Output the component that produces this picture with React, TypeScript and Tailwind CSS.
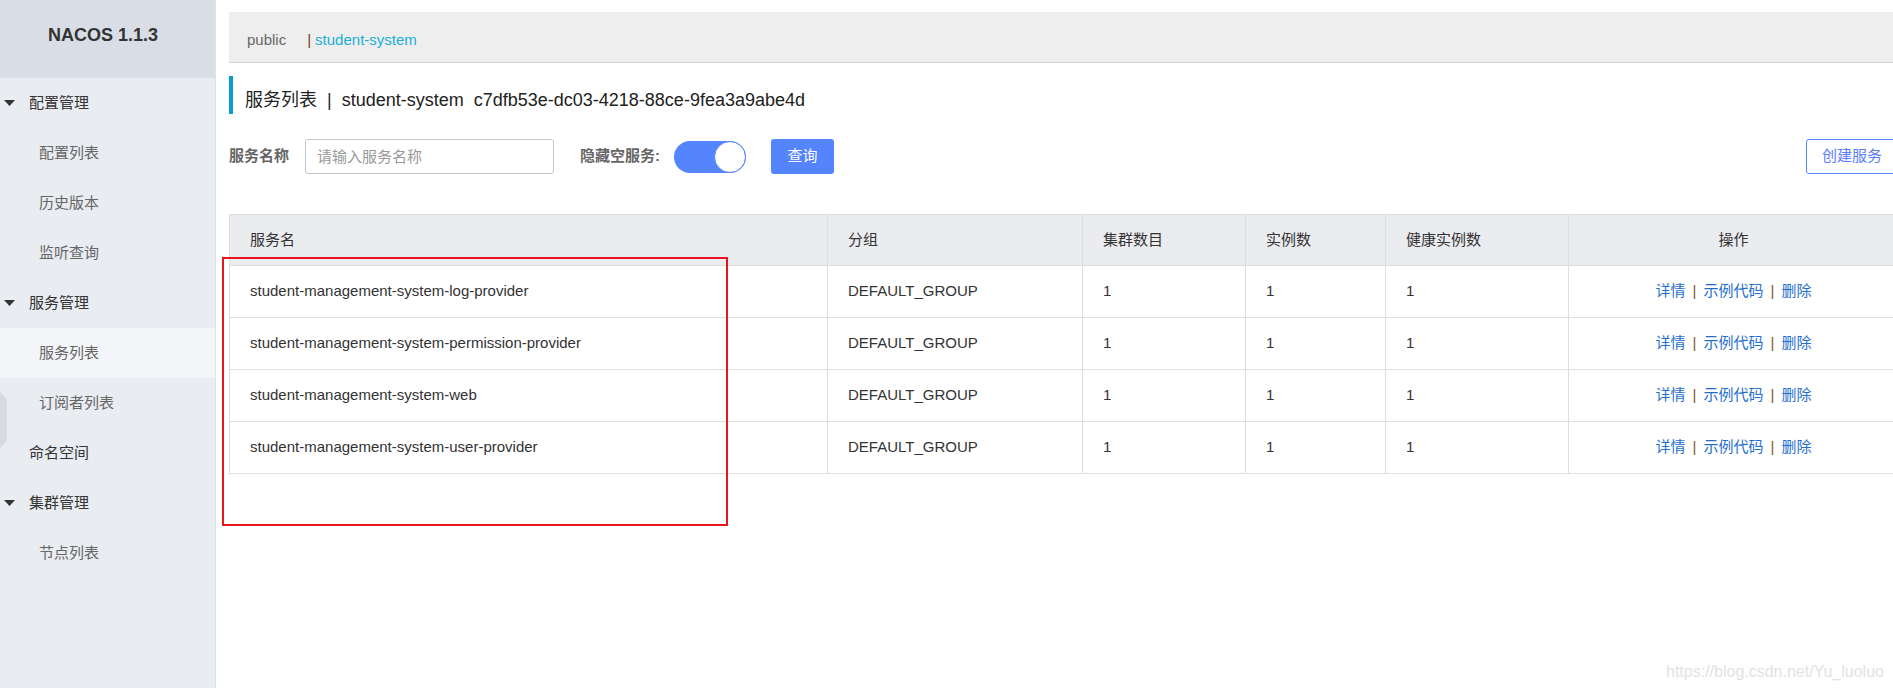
import React from 'react';

const FONT = "font-['Liberation_Sans','Noto_Sans_CJK_SC',sans-serif]";

// sidebar menu, in display order
const MENU: { label: string; level: 0 | 1; caret?: boolean; active?: boolean }[] = [
  { label: '配置管理', level: 0, caret: true },
  { label: '配置列表', level: 1 },
  { label: '历史版本', level: 1 },
  { label: '监听查询', level: 1 },
  { label: '服务管理', level: 0, caret: true },
  { label: '服务列表', level: 1, active: true },
  { label: '订阅者列表', level: 1 },
  { label: '命名空间', level: 0 },
  { label: '集群管理', level: 0, caret: true },
  { label: '节点列表', level: 1 },
];

const SERVICES = [
  'student-management-system-log-provider',
  'student-management-system-permission-provider',
  'student-management-system-web',
  'student-management-system-user-provider',
];

const COLS = 'grid grid-cols-[598px_255px_163px_140px_183px_330px]';
const CELL = 'flex items-center px-[20px] border-r border-b border-[#dcdee3]';

const Caret = () => (
  <svg width="11" height="6" viewBox="0 0 11 6" className="ml-[4px] mr-[14px] shrink-0">
    <path d="M0 0 L11 0 L5.5 6 Z" fill="#333" />
  </svg>
);

function Sidebar() {
  return (
    <aside className="w-[216px] shrink-0 h-full bg-[#e9ecf1] border-r border-[#dfe2e8]">
      <div className="h-[78px] bg-[#d9dee6] pt-[23px] pr-[9px] text-center text-[18px] leading-[24px] font-bold text-[#333]">
        NACOS 1.1.3
      </div>
      {MENU.map((m) => (
        <div
          key={m.label}
          className={`h-[50px] flex items-center text-[15px] ${m.active ? 'bg-[#f4f5f8]' : ''} ${
            m.level === 1 ? 'pl-[39px] text-[#666]' : m.caret ? 'text-[#333]' : 'pl-[29px] text-[#333]'
          }`}
        >
          {m.caret && <Caret />}
          {m.label}
        </div>
      ))}
    </aside>
  );
}

function ServiceTable() {
  return (
    <div className="mt-[40px] border-l border-t border-[#dcdee3] text-[15px] text-[#333]">
      <div className={`${COLS} bg-[#ebecf0]`}>
        <div className={`${CELL} h-[51px]`}>服务名</div>
        <div className={`${CELL} h-[51px]`}>分组</div>
        <div className={`${CELL} h-[51px]`}>集群数目</div>
        <div className={`${CELL} h-[51px]`}>实例数</div>
        <div className={`${CELL} h-[51px]`}>健康实例数</div>
        <div className={`${CELL} h-[51px] justify-center`}>操作</div>
      </div>
      {SERVICES.map((name) => (
        <div key={name} className={`${COLS} bg-white`}>
          <div className={`${CELL} h-[52px]`}>{name}</div>
          <div className={`${CELL} h-[52px]`}>DEFAULT_GROUP</div>
          <div className={`${CELL} h-[52px]`}>1</div>
          <div className={`${CELL} h-[52px]`}>1</div>
          <div className={`${CELL} h-[52px]`}>1</div>
          <div className={`${CELL} h-[52px] justify-center gap-[7px]`}>
            <span className="text-[#1f6fd0]">详情</span>
            <span className="text-[#8a5530]">|</span>
            <span className="text-[#1f6fd0]">示例代码</span>
            <span className="text-[#8a5530]">|</span>
            <span className="text-[#1f6fd0]">删除</span>
          </div>
        </div>
      ))}
    </div>
  );
}

export default function App() {
  return (
    <div className={`relative w-[1893px] h-[688px] overflow-hidden flex bg-white ${FONT}`}>
      <Sidebar />

      <main className="flex-1 pl-[13px] pt-[12px] overflow-hidden">
        <div className="w-[1669px]">
          {/* breadcrumb */}
          <div className="h-[51px] bg-[#eeeeee] border-b border-[#d0d0d0] flex items-center pt-[7px] pl-[18px] text-[15px]">
            <span className="text-[#666]">public</span>
            <span className="ml-[21px] text-[#7a3a22]">|</span>
            <span className="ml-[4px] text-[#1ab0d8]">student-system</span>
          </div>

          {/* title */}
          <div className="mt-[13px] h-[38px] border-l-[4px] border-[#0a9bd0] pl-[12px] pt-[12px] text-[18px] leading-[24px] text-[#222]">
            服务列表 &nbsp;|&nbsp; student-system&nbsp; c7dfb53e-dc03-4218-88ce-9fea3a9abe4d
          </div>

          {/* filter row */}
          <div className="mt-[25px] h-[35px] flex items-center text-[15px]">
            <span className="font-bold text-[#666]">服务名称</span>
            <input
              className="ml-[16px] w-[249px] h-[35px] border border-[#c4c6cf] rounded-[3px] px-[11px] text-[15px] placeholder:text-[#999] outline-none"
              placeholder="请输入服务名称"
            />
            <span className="ml-[26px] font-bold text-[#666]">隐藏空服务:</span>
            <div className="ml-[14px] w-[72px] h-[32px] rounded-full bg-[#5584ff] flex justify-end">
              <div className="w-[32px] h-[32px] rounded-full bg-white border border-[#5584ff]" />
            </div>
            <button className="ml-[25px] w-[63px] h-[35px] rounded-[3px] bg-[#5584ff] text-white text-[15px]">
              查询
            </button>
            <button className="ml-auto w-[92px] h-[35px] rounded-[3px] border border-[#5584ff] text-[#5a7dff] text-[15px]">
              创建服务
            </button>
          </div>

          <ServiceTable />
        </div>
      </main>

      {/* sidebar collapse handle */}
      <div className="absolute left-0 top-[392px] w-[7px] h-[56px] bg-[#d6dbe3] [clip-path:polygon(0_0,100%_14%,100%_86%,0_100%)]" />

      {/* annotation box */}
      <div className="absolute left-[222px] top-[257px] w-[506px] h-[269px] border-2 border-[#e8141f]" />

      {/* watermark */}
      <div className="absolute left-[1666px] top-[660px] text-[16px] text-[#e2e2e2] font-['Liberation_Sans',sans-serif]">
        https://blog.csdn.net/Yu_luoluo
      </div>
    </div>
  );
}
